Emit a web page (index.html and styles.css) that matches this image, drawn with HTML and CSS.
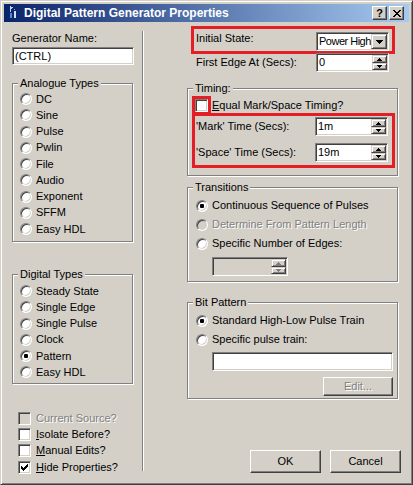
FILE: index.html
```html
<!DOCTYPE html>
<html lang="en">
<head>
<meta charset="utf-8">
<title>Digital Pattern Generator Properties</title>
<link rel="stylesheet" href="styles.css">
</head>
<body>
<div class="window">
  <div class="titlebar">
    <svg class="appicon" width="16" height="16" viewBox="0 0 16 16">
      <path fill="#b8d4fa" d="M4 1h1v6h-1z M5 2h2v1h-2z M5 3h1v1h-1z"/>
      <path fill="#5a86cc" d="M4 8h2v5h-2z"/>
      <path fill="#cfe2ff" d="M8 6h2v7h-2z"/>
      <path fill="#7fa6e0" d="M8 4h1v1h-1z"/>
    </svg>
    <span class="title">Digital Pattern Generator Properties</span>
    <div class="tbtns">
      <div class="tbtn help">?</div>
      <div class="tbtn close">
        <svg width="8" height="7" viewBox="0 0 8 7"><path d="M0 0h2v1h-2z M6 0h2v1h-2z M1 1h2v1h-2z M5 1h2v1h-2z M2 2h4v1h-4z M3 3h2v1h-2z M2 4h4v1h-4z M1 5h2v1h-2z M5 5h2v1h-2z M0 6h2v1h-2z M6 6h2v1h-2z"/></svg>
      </div>
    </div>
  </div>

  <div class="client">
    <div class="leftcol">
      <div class="name-lbl">Generator Name:</div>
      <div class="edit name-edit">(CTRL)</div>

      <div class="group analogue">
        <div class="gtitle">Analogue Types</div>
        <div class="rlist">
          <div class="rrow"><span class="radio"></span>DC</div>
          <div class="rrow"><span class="radio"></span>Sine</div>
          <div class="rrow"><span class="radio"></span>Pulse</div>
          <div class="rrow"><span class="radio"></span>Pwlin</div>
          <div class="rrow"><span class="radio"></span>File</div>
          <div class="rrow"><span class="radio"></span>Audio</div>
          <div class="rrow"><span class="radio"></span>Exponent</div>
          <div class="rrow"><span class="radio"></span>SFFM</div>
          <div class="rrow"><span class="radio"></span>Easy HDL</div>
        </div>
      </div>

      <div class="group digital">
        <div class="gtitle">Digital Types</div>
        <div class="rlist">
          <div class="rrow"><span class="radio"></span>Steady State</div>
          <div class="rrow"><span class="radio"></span>Single Edge</div>
          <div class="rrow"><span class="radio"></span>Single Pulse</div>
          <div class="rrow"><span class="radio"></span>Clock</div>
          <div class="rrow"><span class="radio on"></span>Pattern</div>
          <div class="rrow"><span class="radio"></span>Easy HDL</div>
        </div>
      </div>

      <div class="checks">
        <div class="crow disabled"><span class="cb off"></span>Current Source?</div>
        <div class="crow"><span class="cb"></span><span><u>I</u>solate Before?</span></div>
        <div class="crow"><span class="cb"></span><span><u>M</u>anual Edits?</span></div>
        <div class="crow"><span class="cb"><svg width="7" height="7" viewBox="0 0 7 7"><path d="M0 2h1v3h-1z M1 3h1v3h-1z M2 4h1v3h-1z M3 3h1v3h-1z M4 2h1v3h-1z M5 1h1v3h-1z M6 0h1v3h-1z"/></svg></span><span><u>H</u>ide Properties?</span></div>
      </div>
    </div>

    <div class="vsep"></div>

    <div class="rightcol">
      <div class="hl-init">
        <span class="init-lbl">Initial State:</span>
        <div class="combo">
          <span class="ctext">Power High</span>
          <span class="cbtn"><svg width="7" height="4" viewBox="0 0 7 4"><path d="M0 0h7v1h-7z M1 1h5v1h-5z M2 2h3v1h-3z M3 3h1v1h-1z"/></svg></span>
        </div>
      </div>

      <div class="frow first">
        <span class="flbl">First Edge At (Secs):</span>
        <div class="spin">
          <span class="stext">0</span>
          <span class="sbtns">
            <span class="sb top"><svg width="5" height="3" viewBox="0 0 5 3"><path d="M2 0h1v1h-1z M1 1h3v1h-3z M0 2h5v1h-5z"/></svg></span>
            <span class="sb bot"><svg width="5" height="3" viewBox="0 0 5 3"><path d="M0 0h5v1h-5z M1 1h3v1h-3z M2 2h1v1h-1z"/></svg></span>
          </span>
        </div>
      </div>

      <div class="group timing">
        <div class="gtitle">Timing:</div>
        <div class="cbrow"><span class="cb hl-cb"></span><span><u>E</u>qual Mark/Space Timing?</span></div>
        <div class="hl-times">
          <div class="frow">
            <span class="flbl">'Mark' Time (Secs):</span>
            <div class="spin">
              <span class="stext">1m</span>
              <span class="sbtns">
                <span class="sb top"><svg width="5" height="3" viewBox="0 0 5 3"><path d="M2 0h1v1h-1z M1 1h3v1h-3z M0 2h5v1h-5z"/></svg></span>
                <span class="sb bot"><svg width="5" height="3" viewBox="0 0 5 3"><path d="M0 0h5v1h-5z M1 1h3v1h-3z M2 2h1v1h-1z"/></svg></span>
              </span>
            </div>
          </div>
          <div class="frow second">
            <span class="flbl">'Space' Time (Secs):</span>
            <div class="spin">
              <span class="stext">19m</span>
              <span class="sbtns">
                <span class="sb top"><svg width="5" height="3" viewBox="0 0 5 3"><path d="M2 0h1v1h-1z M1 1h3v1h-3z M0 2h5v1h-5z"/></svg></span>
                <span class="sb bot"><svg width="5" height="3" viewBox="0 0 5 3"><path d="M0 0h5v1h-5z M1 1h3v1h-3z M2 2h1v1h-1z"/></svg></span>
              </span>
            </div>
          </div>
        </div>
      </div>

      <div class="group transitions">
        <div class="gtitle">Transitions</div>
        <div class="rlist2">
          <div class="rrow2"><span class="radio on"></span>Continuous Sequence of Pulses</div>
          <div class="rrow2 disabled"><span class="radio off"></span>Determine From Pattern Length</div>
          <div class="rrow2"><span class="radio"></span>Specific Number of Edges:</div>
        </div>
        <div class="spin small off">
          <span class="stext"></span>
          <span class="sbtns">
            <span class="sb top"><svg width="5" height="3" viewBox="0 0 5 3"><path fill="#808080" d="M2 0h1v1h-1z M1 1h3v1h-3z M0 2h5v1h-5z"/></svg></span>
            <span class="sb bot"><svg width="5" height="3" viewBox="0 0 5 3"><path fill="#808080" d="M0 0h5v1h-5z M1 1h3v1h-3z M2 2h1v1h-1z"/></svg></span>
          </span>
        </div>
      </div>

      <div class="group bitpattern">
        <div class="gtitle">Bit Pattern</div>
        <div class="rlist2">
          <div class="rrow2"><span class="radio on"></span>Standard High-Low Pulse Train</div>
          <div class="rrow2"><span class="radio"></span>Specific pulse train:</div>
        </div>
        <div class="edit train-edit"></div>
        <div class="btn edit-btn disabled">Edit...</div>
      </div>

      <div class="dlg-btns">
        <div class="btn">OK</div>
        <div class="btn">Cancel</div>
      </div>
    </div>
  </div>
</div>
</body>
</html>
```

FILE: styles.css
```css
* { box-sizing: border-box; }
html, body { margin: 0; padding: 0; }
body {
  width: 413px;
  height: 485px;
  overflow: hidden;
  background: #d4d0c8;
  font: 11px/13px "Liberation Sans", Arial, sans-serif;
  color: #000;
}

.window {
  width: 413px;
  height: 485px;
  border: 1px solid;
  border-color: #d4d0c8 #404040 #404040 #d4d0c8;
  box-shadow: inset 1px 1px 0 #fff, inset -1px -1px 0 #808080;
  padding: 3px;
  display: flex;
  flex-direction: column;
  background: #d4d0c8;
}

/* title bar */
.titlebar {
  flex: none;
  height: 18px;
  display: flex;
  align-items: center;
  background: linear-gradient(to right, #0a246a, #a6caf0);
  color: #fff;
}
.appicon { flex: none; margin-left: 2px; display: block; }
.title { font-weight: bold; font-size: 12px; margin-left: 2px; white-space: nowrap; }
.tbtns { margin-left: auto; margin-right: 5px; display: flex; gap: 2px; }
.tbtn {
  width: 15px;
  height: 14px;
  background: #d4d0c8;
  border: 1px solid;
  border-color: #fff #404040 #404040 #fff;
  box-shadow: inset -1px -1px 0 #808080;
  display: flex;
  align-items: center;
  justify-content: center;
  color: #000;
  font-weight: bold;
  font-size: 11px;
  line-height: 12px;
}
.tbtn svg { display: block; }

/* client */
.client { flex: 1; display: flex; }

.leftcol {
  flex: none;
  width: 138px;
  padding-left: 8px;
  display: flex;
  flex-direction: column;
  align-items: flex-start;
}
.name-lbl { margin-top: 10px; }
.edit {
  background: #fff;
  border: 1px solid;
  border-color: #808080 #fff #fff #808080;
  box-shadow: inset 1px 1px 0 #404040, inset -1px -1px 0 #d4d0c8;
}
.name-edit {
  margin-top: 2px;
  width: 122px;
  height: 18px;
  padding-left: 2px;
  line-height: 16px;
}

/* group boxes */
.group {
  border: 1px solid #808080;
  box-shadow: 1px 1px 0 #fff, inset 1px 1px 0 #fff;
  display: flex;
  flex-direction: column;
  align-items: flex-start;
}
.gtitle {
  margin: -7px 0 0 5px;
  padding: 0 2px;
  height: 13px;
  background: #d4d0c8;
  white-space: nowrap;
}
.analogue { margin-top: 18px; width: 121px; height: 159px; }
.digital { margin-top: 32px; width: 121px; height: 110px; }
.rlist { padding-top: 1px; }
.digital .rlist { padding-top: 2px; }
.rrow {
  height: 16.25px;
  display: flex;
  align-items: center;
  padding-left: 7px;
  white-space: nowrap;
}

.radio {
  flex: none;
  width: 12px;
  height: 12px;
  border-radius: 50%;
  border: 1px solid;
  border-color: #808080 #fff #fff #808080;
  box-shadow: inset 1px 1px 0 #404040, inset -1px -1px 0 #d4d0c8;
  background: #fff;
  margin-right: 4px;
  display: flex;
  align-items: center;
  justify-content: center;
}
.radio.on::after {
  content: "";
  width: 4px;
  height: 4px;
  border-radius: 1px;
  background: #000;
}
.radio.off { background: #d4d0c8; }

.cb {
  flex: none;
  width: 13px;
  height: 13px;
  border: 1px solid;
  border-color: #808080 #fff #fff #808080;
  box-shadow: inset 1px 1px 0 #404040, inset -1px -1px 0 #d4d0c8;
  background: #fff;
  margin-right: 5px;
}
.cb svg { display: block; margin: 2px; }
.cb.off { background: #d4d0c8; }

.checks { margin: 26px 0 0 6px; }
.crow {
  height: 16.33px;
  display: flex;
  align-items: center;
  white-space: nowrap;
}
.disabled { color: #808080; text-shadow: 1px 1px 0 #fff; }

.vsep {
  flex: none;
  width: 2px;
  margin-top: 9px;
  height: 440px;
  border-left: 1px solid #808080;
  border-right: 1px solid #fff;
}

/* right column */
.rightcol {
  flex: 1;
  padding: 0 10px 0 43px;
  display: flex;
  flex-direction: column;
  align-items: flex-start;
}

.hl-init {
  margin: 7px 0 0 7px;
  width: 198px;
  height: 22px;
  outline: 3px solid #e31e24;
  display: flex;
  align-items: flex-start;
}
.init-lbl { margin: 3px 0 0 2px; }
.combo {
  margin: 3px 3px 0 auto;
  width: 73px;
  height: 19px;
  padding: 1px;
  display: flex;
  background: #fff;
  border: 1px solid;
  border-color: #808080 #fff #fff #808080;
  box-shadow: inset 1px 1px 0 #404040, inset -1px -1px 0 #d4d0c8;
}
.ctext {
  flex: 1;
  white-space: nowrap;
  padding-left: 1px;
  line-height: 15px;
  letter-spacing: -0.5px;
}
.cbtn, .sb {
  flex: none;
  background: #d4d0c8;
  border: 1px solid;
  border-color: #d4d0c8 #404040 #404040 #d4d0c8;
  box-shadow: inset 1px 1px 0 #fff, inset -1px -1px 0 #808080;
  display: flex;
  align-items: center;
  justify-content: center;
}
.cbtn { width: 16px; height: 15px; }
.cbtn svg, .sb svg { display: block; }

.frow {
  height: 19px;
  display: flex;
  align-items: center;
  white-space: nowrap;
}
.frow.first { margin: 2px 0 0 9px; width: 193px; }
.flbl { flex: 1; }

.spin {
  flex: none;
  width: 73px;
  height: 19px;
  padding: 1px;
  display: flex;
  background: #fff;
  border: 1px solid;
  border-color: #808080 #fff #fff #808080;
  box-shadow: inset 1px 1px 0 #404040, inset -1px -1px 0 #d4d0c8;
}
.stext { flex: 1; padding-left: 1px; line-height: 15px; }
.sbtns { flex: none; width: 15px; display: flex; flex-direction: column; }
.sb.top { height: 8px; }
.sb.bot { height: 7px; }
.spin.off { background: #d4d0c8; }

.timing { margin-top: 16px; width: 211px; height: 88px; }
.cbrow {
  margin: 2px 0 0 7px;
  height: 16px;
  display: flex;
  align-items: center;
  white-space: nowrap;
}
.cbrow .cb { margin-right: 4px; }
.hl-cb { outline: 3px solid #e31e24; }
.hl-times {
  margin: 3px 0 0 7px;
  width: 197px;
  padding: 1px 4px 3px 1px;
  outline: 3px solid #e31e24;
}
.frow.second { margin-top: 7px; }

.transitions { margin-top: 11px; width: 211px; height: 95px; }
.bitpattern { margin-top: 20px; width: 211px; height: 97px; }
.rlist2 { padding-top: 2px; }
.rrow2 {
  height: 19px;
  display: flex;
  align-items: center;
  padding-left: 8px;
  white-space: nowrap;
}
.spin.small { margin: 4px 0 0 24px; width: 76px; }
.train-edit { margin: 3px 0 0 24px; width: 181px; height: 19px; }

.btn {
  background: #d4d0c8;
  border: 1px solid;
  border-color: #fff #404040 #404040 #fff;
  box-shadow: inset -1px -1px 0 #808080;
  display: flex;
  align-items: center;
  justify-content: center;
  white-space: nowrap;
}
.edit-btn { margin: 6px 0 0 135px; width: 70px; height: 19px; }

.dlg-btns {
  margin: 51px -2px 0 0;
  align-self: stretch;
  display: flex;
  justify-content: flex-end;
  gap: 9px;
}
.dlg-btns .btn { width: 71px; height: 23px; }
```
